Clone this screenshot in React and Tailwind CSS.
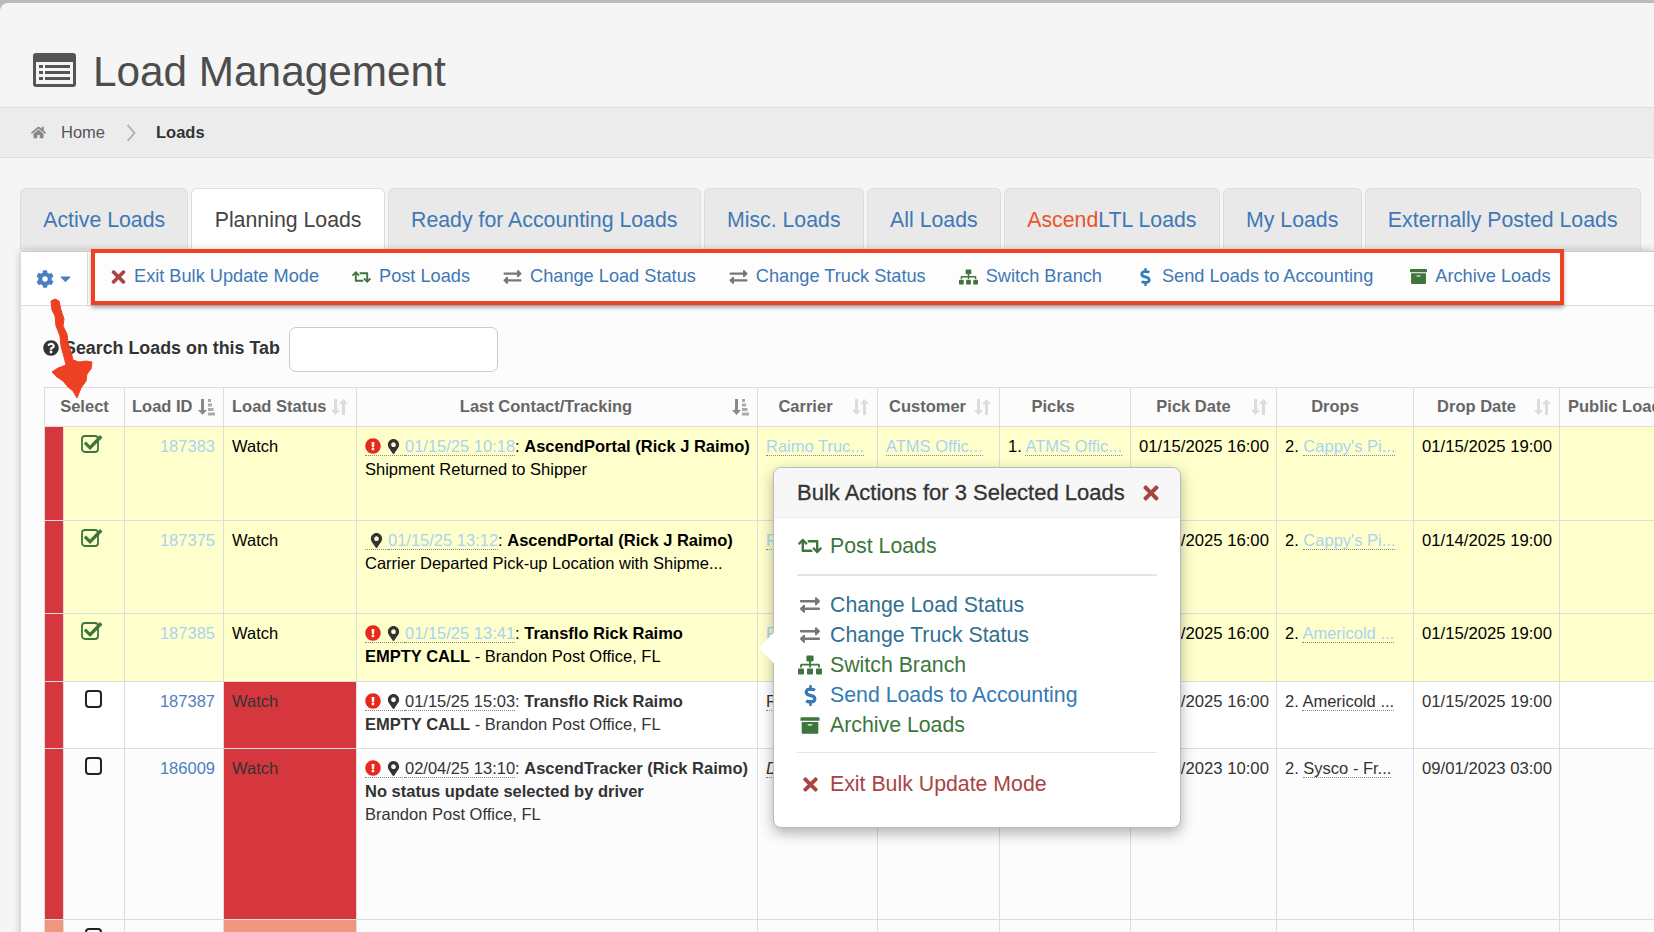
import React from "react";
import {
  FaCog,
  FaCaretDown,
  FaTimes,
  FaRetweet,
  FaExchangeAlt,
  FaSitemap,
  FaDollarSign,
  FaArchive,
  FaHome,
  FaMapMarkerAlt,
  FaExclamationCircle,
  FaQuestionCircle,
} from "react-icons/fa";

const tabs = [
  { label: "Active Loads" },
  { label: "Planning Loads", active: true },
  { label: "Ready for Accounting Loads" },
  { label: "Misc. Loads" },
  { label: "All Loads" },
  { label: "LTL Loads", prefix: "Ascend" },
  { label: "My Loads" },
  { label: "Externally Posted Loads" },
];

const TitleIcon = () => (
  <svg width="43" height="34" viewBox="0 0 43 34">
    <rect x="0" y="0" width="43" height="34" rx="3" fill="#555" />
    <rect x="3" y="9" width="37" height="22" fill="#f5f5f5" />
    <rect x="6" y="12" width="4" height="3" fill="#555" />
    <rect x="6" y="18" width="4" height="3" fill="#555" />
    <rect x="6" y="24" width="4" height="3" fill="#555" />
    <rect x="12" y="12" width="25" height="3" fill="#555" />
    <rect x="12" y="18" width="25" height="3" fill="#555" />
    <rect x="12" y="24" width="25" height="3" fill="#555" />
  </svg>
);

const SortActive = () => (
  <svg width="17" height="18" viewBox="0 0 17 18" className="absolute right-[8px] top-[10px]">
    <path d="M3 1h3v11h3l-4.500 5L0 12h3z" fill="#8a8a8a" />
    <rect x="10" y="1" width="3" height="3" fill="#aaa" />
    <rect x="10" y="5.500" width="4" height="3" fill="#aaa" />
    <rect x="10" y="10" width="5.500" height="3" fill="#aaa" />
    <rect x="10" y="14.500" width="7" height="3" fill="#aaa" />
  </svg>
);

const SortIdle = () => (
  <svg width="17" height="18" viewBox="0 0 17 18" className="absolute right-[8px] top-[10px]">
    <path d="M3 1h3v11h3l-4.500 5L0 12h3z" fill="#dcdcdc" />
    <path d="M11 17h3V6h3l-4.500-5L8 6h3z" fill="#dcdcdc" />
  </svg>
);

const Checked = () => (
  <svg width="22" height="20" viewBox="0 0 22 20" className="ml-[17px]">
    <rect x="1" y="3" width="16" height="16" rx="3" fill="none" stroke="#3c763d" strokeWidth="1.800" />
    <path d="M5 8.500l4 4L19 2l2.500 2.500L9 17 2.800 10.800z" fill="#3c763d" />
  </svg>
);

const Unchecked = () => (
  <div className="ml-[21px] h-[18px] w-[17px] rounded-[4px] border-2 border-[#222]" />
);

const Dotted = ({ className, children }) => (
  <span className={`border-b border-dotted border-[#888] ${className || ""}`}>{children}</span>
);

const Flags = ({ alert }) => (
  <span className="border-b border-dotted border-[#888]">
    {alert ? (
      <FaExclamationCircle className="mr-[6px] inline h-[16px] w-[16px] align-[-2px] text-[#e8281f]" />
    ) : (
      <span className="inline-block w-[5px]" />
    )}
    <FaMapMarkerAlt className="mr-[5px] inline h-[15px] w-[13px] align-[-2px] text-[#333]" />
  </span>
);

const rows = [
  {
    id: "187383",
    checked: true,
    dim: true,
    h: "h-[94px]",
    bg: "bg-[#ffffcc]",
    alert: true,
    date: "01/15/25 10:18",
    who: "AscendPortal (Rick J Raimo)",
    body: <div>Shipment Returned to Shipper</div>,
    carrier: "Raimo Truc...",
    customer: "ATMS Offic...",
    pick: "ATMS Offic...",
    pickDate: "01/15/2025 16:00",
    drop: "Cappy's Pi...",
    dropDate: "01/15/2025 19:00",
  },
  {
    id: "187375",
    checked: true,
    dim: true,
    h: "h-[93px]",
    bg: "bg-[#ffffcc]",
    date: "01/15/25 13:12",
    who: "AscendPortal (Rick J Raimo)",
    body: <div>Carrier Departed Pick-up Location with Shipme...</div>,
    carrier: "Raimo Truc...",
    customer: "ATMS Offic...",
    pick: "ATMS Offic...",
    pickDate: "01/15/2025 16:00",
    drop: "Cappy's Pi...",
    dropDate: "01/14/2025 19:00",
  },
  {
    id: "187385",
    checked: true,
    dim: true,
    h: "h-[68px]",
    bg: "bg-[#ffffcc]",
    alert: true,
    date: "01/15/25 13:41",
    who: "Transflo Rick Raimo",
    body: (
      <div>
        <b>EMPTY CALL</b> - Brandon Post Office, FL
      </div>
    ),
    carrier: "Raimo Truc...",
    customer: "ATMS Offic...",
    pick: "ATMS Offic...",
    pickDate: "01/15/2025 16:00",
    drop: "Americold ...",
    dropDate: "01/15/2025 19:00",
  },
  {
    id: "187387",
    status: "bg-[#d6363e]",
    h: "h-[67px]",
    bg: "bg-white",
    alert: true,
    date: "01/15/25 15:03",
    who: "Transflo Rick Raimo",
    body: (
      <div>
        <b>EMPTY CALL</b> - Brandon Post Office, FL
      </div>
    ),
    carrier: "Raimo Truc...",
    customer: "ATMS Offic...",
    pick: "ATMS Offic...",
    pickDate: "01/15/2025 16:00",
    drop: "Americold ...",
    dropDate: "01/15/2025 19:00",
  },
  {
    id: "186009",
    status: "bg-[#d6363e]",
    h: "h-[171px]",
    bg: "bg-[#fcfcfc]",
    alert: true,
    date: "02/04/25 13:10",
    who: "AscendTracker (Rick Raimo)",
    italic: true,
    body: (
      <div>
        <div className="font-bold">No status update selected by driver</div>
        <div>Brandon Post Office, FL</div>
      </div>
    ),
    carrier: "Dispatch...",
    customer: "",
    pick: "",
    pickDate: "09/01/2023 10:00",
    drop: "Sysco - Fr...",
    dropDate: "09/01/2023 03:00",
  },
];

const toolbar = [
  { label: "Exit Bulk Update Mode", icon: <FaTimes className="h-[20px] w-[15px] text-[#a94442]" /> },
  { label: "Post Loads", icon: <FaRetweet className="h-[18px] w-[19px] text-[#3c763d]" /> },
  { label: "Change Load Status", icon: <FaExchangeAlt className="h-[18px] w-[19px] text-[#777]" /> },
  { label: "Change Truck Status", icon: <FaExchangeAlt className="h-[18px] w-[19px] text-[#777]" /> },
  { label: "Switch Branch", icon: <FaSitemap className="h-[18px] w-[19px] text-[#3c763d]" /> },
  { label: "Send Loads to Accounting", icon: <FaDollarSign className="ml-[5px] mr-[3px] h-[18px] w-[11px] text-[#337ab7]" /> },
  { label: "Archive Loads", icon: <FaArchive className="ml-[4px] h-[17px] w-[17px] text-[#3c763d]" /> },
];

const App = () => {
  return (
    <div className="relative h-[932px] w-[1654px] overflow-hidden bg-[#bbb] pt-[3px] font-['Liberation_Sans',Arial,sans-serif] text-[16.500px] text-[#333]">
      <div className="h-full rounded-tl-[8px] bg-[#f5f5f5]">
        {/* Page title */}
        <div className="flex h-[105px] items-end gap-[17px] border-b border-[#ddd] pb-[9px] pl-[33px]">
          <div className="mb-[11px]">
            <TitleIcon />
          </div>
          <h1 className="text-[42.300px] leading-[52px] text-[#4d4d4d]">Load Management</h1>
        </div>

        {/* Breadcrumb */}
        <div className="flex h-[50px] items-center border-b border-[#ddd] bg-[#ececec] pl-[31px]">
          <FaHome className="h-[15px] w-[15px] text-[#888]" />
          <span className="ml-[15px] text-[#555]">Home</span>
          <svg width="10" height="18" viewBox="0 0 10 18" className="ml-[21px]">
            <path d="M1.500 1l7 8-7 8" fill="none" stroke="#aaa" strokeWidth="1.600" />
          </svg>
          <span className="ml-[20px] font-bold text-[#333]">Loads</span>
        </div>

        {/* Tabs */}
        <div className="flex gap-[3px] pl-[20px] pt-[30px]">
          {tabs.map((t) => (
            <div
              key={t.label}
              className={
                t.active
                  ? "flex h-[62px] items-center rounded-t-[6px] border border-b-0 border-[#ddd] bg-white px-[22.250px] pt-[3px] text-[21.300px] text-[#444]"
                  : "flex h-[62px] items-center rounded-t-[6px] border border-b-0 border-[#ddd] bg-[#e9e9e9] px-[22.250px] pt-[3px] text-[21.300px] text-[#3f78b5]"
              }
            >
              {t.prefix && <span className="text-[#e8562a]">{t.prefix}</span>}
              {t.label}
            </div>
          ))}
        </div>

        {/* Panel */}
        <div className="relative z-10 ml-[21px] mt-[1px] h-[700px] border-t border-[#ccc] bg-[#fcfcfc] shadow-[0_0_8px_rgba(0,0,0,0.25)]">
          <div className="flex h-[54px] border-b border-[#ddd] bg-white">
            <div className="flex w-[67px] items-center justify-center gap-[4px] border-r border-[#ddd] text-[#4a80bd]">
              <FaCog className="h-[18px] w-[18px]" />
              <FaCaretDown className="h-[17px] w-[15px]" />
            </div>
            <div className="z-10 ml-[3px] -mt-[3px] flex h-[56px] w-[1473px] items-center gap-[33px] border-4 border-[#ee4023] bg-[#fdfdfd] pl-[16px] shadow-[0_3px_4px_rgba(0,0,0,0.3)]">
              {toolbar.map((item) => (
                <div key={item.label} className="flex items-center gap-[8px] text-[18.200px] text-[#3f78b5]">
                  {item.icon}
                  <span>{item.label}</span>
                </div>
              ))}
            </div>
          </div>

          {/* Search */}
          <div className="flex h-[81px] items-start pl-[22px] pt-[21px]">
            <div className="mt-[8px] flex items-center gap-[5px] text-[17.850px] font-bold text-[#333]">
              <FaQuestionCircle className="h-[16px] w-[16px]" />
              <span>Search Loads on this Tab</span>
            </div>
            <div className="ml-[9px] h-[45px] w-[209px] rounded-[7px] border border-[#ccc] bg-white" />
          </div>

          {/* Table */}
          <table className="ml-[23px] w-[1705px] table-fixed border-collapse text-[16.500px]">
            <colgroup>
              <col className="w-[19px]" />
              <col className="w-[61px]" />
              <col className="w-[99px]" />
              <col className="w-[133px]" />
              <col className="w-[401px]" />
              <col className="w-[120px]" />
              <col className="w-[122px]" />
              <col className="w-[131px]" />
              <col className="w-[146px]" />
              <col className="w-[137px]" />
              <col className="w-[146px]" />
              <col className="w-[190px]" />
            </colgroup>
            <thead>
              <tr className="h-[39px] font-bold text-[#666]">
                <th colSpan={2} className="border border-[#ddd] px-1 pb-[2px] text-center">Select</th>
                <th className="relative border border-[#ddd] pb-[2px] pl-[7px] text-left">Load ID<SortActive /></th>
                <th className="relative border border-[#ddd] pb-[2px] pl-[8px] text-left">Load Status<SortIdle /></th>
                <th className="relative border border-[#ddd] pb-[2px] pr-[22px] text-center">Last Contact/Tracking<SortActive /></th>
                <th className="relative border border-[#ddd] pb-[2px] pr-[24px] text-center">Carrier<SortIdle /></th>
                <th className="relative border border-[#ddd] pb-[2px] pr-[22px] text-center">Customer<SortIdle /></th>
                <th className="border border-[#ddd] pb-[2px] pr-[24px] text-center">Picks</th>
                <th className="relative border border-[#ddd] pb-[2px] pr-[20px] text-center">Pick Date<SortIdle /></th>
                <th className="border border-[#ddd] pb-[2px] pr-[20px] text-center">Drops</th>
                <th className="relative border border-[#ddd] pb-[2px] pr-[20px] text-center">Drop Date<SortIdle /></th>
                <th className="whitespace-nowrap border border-[#ddd] pb-[2px] pl-[8px] text-left">Public Load</th>
              </tr>
            </thead>
            <tbody>
              {rows.map((r) => {
                const linkColor = r.dim ? "text-[#a9d3f2]" : "text-[#4a80bd]";
                const textColor = r.dim ? "text-black" : "text-[#333]";
                return (
                  <tr key={r.id} className={`${r.h} ${r.bg} ${textColor} leading-[23px]`}>
                    <td className="border border-[#ddd] bg-[#d6363e]" />
                    <td className={`border border-[#ddd] align-top ${r.checked ? "pt-[6px]" : "pt-[8px]"}`}>
                      {r.checked ? <Checked /> : <Unchecked />}
                    </td>
                    <td className={`border border-[#ddd] px-[8px] pt-[8px] text-right align-top ${linkColor}`}>{r.id}</td>
                    <td className={`border border-[#ddd] px-[8px] pt-[8px] align-top ${r.status || ""}`}>Watch</td>
                    <td className="whitespace-nowrap border border-[#ddd] px-[8px] pt-[8px] align-top">
                      <div>
                        <Flags alert={r.alert} />
                        <Dotted className={r.dim ? "text-[#a9d3f2]" : ""}>{r.date}</Dotted>: <b>{r.who}</b>
                      </div>
                      {r.body}
                    </td>
                    <td className="overflow-hidden whitespace-nowrap border border-[#ddd] px-[8px] pt-[8px] align-top">
                      <Dotted className={r.dim ? "text-[#a9d3f2]" : r.italic ? "italic" : ""}>{r.carrier}</Dotted>
                    </td>
                    <td className="overflow-hidden whitespace-nowrap border border-[#ddd] px-[8px] pt-[8px] align-top">
                      {r.customer && <Dotted className={r.dim ? "text-[#a9d3f2]" : ""}>{r.customer}</Dotted>}
                    </td>
                    <td className="overflow-hidden whitespace-nowrap border border-[#ddd] px-[8px] pt-[8px] align-top">
                      {r.pick && (
                        <>
                          1. <Dotted className={r.dim ? "text-[#a9d3f2]" : ""}>{r.pick}</Dotted>
                        </>
                      )}
                    </td>
                    <td className="whitespace-nowrap border border-[#ddd] px-[8px] pt-[8px] align-top text-[16.700px]">{r.pickDate}</td>
                    <td className="overflow-hidden whitespace-nowrap border border-[#ddd] px-[8px] pt-[8px] align-top">
                      2. <Dotted className={r.dim ? "text-[#a9d3f2]" : ""}>{r.drop}</Dotted>
                    </td>
                    <td className="whitespace-nowrap border border-[#ddd] px-[8px] pt-[8px] align-top text-[16.700px]">{r.dropDate}</td>
                    <td className="border border-[#ddd]" />
                  </tr>
                );
              })}
              <tr className="h-[40px] bg-[#fcfcfc]">
                <td className="border border-[#ddd] bg-[#f0967c]" />
                <td className="border border-[#ddd] pt-[8px] align-top"><Unchecked /></td>
                <td className="border border-[#ddd]" />
                <td className="border border-[#ddd] bg-[#f0967c]" />
                <td className="border border-[#ddd] px-[8px] pt-[8px] align-top">
                  <Flags />
                </td>
                <td className="border border-[#ddd]" />
                <td className="border border-[#ddd]" />
                <td className="border border-[#ddd]" />
                <td className="border border-[#ddd]" />
                <td className="border border-[#ddd]" />
                <td className="border border-[#ddd]" />
                <td className="border border-[#ddd]" />
              </tr>
            </tbody>
          </table>
        </div>
      </div>

      {/* Hand-drawn arrow over the table */}
      <svg width="60" height="110" viewBox="0 0 60 110" className="absolute left-[46px] top-[296px] z-20">
        <path
          d="M5 5L9 3L13 5L15 14L18 23L17 30L21 38L22 47L25 56L27 64L33 66L40 65L46 66L45 73L41 78L40 85L35 92L31 102L27 95L22 91L17 85L11 81L6 76L12 72L20 69L18 61L15 50L14 40L10 30L9 20L6 14z"
          fill="#ee4023"
          stroke="#ee4023"
          strokeWidth="1"
        />
      </svg>

      {/* Bulk actions popover */}
      <div className="absolute left-[773px] top-[467px] z-30 h-[361px] w-[408px] rounded-[8px] border border-[#bbb] bg-white shadow-[0_5px_14px_rgba(0,0,0,0.3)]">
        <div className="absolute -left-[11px] top-[169px] h-[22px] w-[22px] rotate-45 bg-white" />
        <div className="relative flex h-[50px] items-center justify-between rounded-t-[8px] border-b border-[#eee] bg-[#f7f7f7] pl-[23px] pr-[21px]">
          <span className="text-[22px] text-[#333] [-webkit-text-stroke:0.3px_#333]">Bulk Actions for 3 Selected Loads</span>
          <FaTimes className="h-[22px] w-[16px] text-[#a94442]" />
        </div>
        <div className="relative pl-[24px] pr-[23px] text-[21.300px] leading-[30px]">
          <div className="mt-[13px] flex items-center gap-[8px] text-[#3c763d]">
            <FaRetweet className="h-[22px] w-[24px]" />
            <span>Post Loads</span>
          </div>
          <div className="-ml-[1px] mb-[14px] mt-[13px] h-[2px] bg-[#e5e5e5]" />
          <div className="flex items-center gap-[8px] text-[#31708f]">
            <FaExchangeAlt className="h-[20px] w-[24px] text-[#777]" />
            <span>Change Load Status</span>
          </div>
          <div className="flex items-center gap-[8px] text-[#31708f]">
            <FaExchangeAlt className="h-[20px] w-[24px] text-[#777]" />
            <span>Change Truck Status</span>
          </div>
          <div className="flex items-center gap-[8px] text-[#3c763d]">
            <FaSitemap className="h-[20px] w-[24px]" />
            <span>Switch Branch</span>
          </div>
          <div className="flex items-center gap-[8px] text-[#337ab7]">
            <span className="flex w-[24px] justify-center"><FaDollarSign className="h-[21px] w-[13px]" /></span>
            <span>Send Loads to Accounting</span>
          </div>
          <div className="flex items-center gap-[8px] text-[#3c763d]">
            <FaArchive className="h-[19px] w-[24px]" />
            <span>Archive Loads</span>
          </div>
          <div className="-ml-[1px] mb-[16px] mt-[12px] h-px bg-[#e5e5e5]" />
          <div className="flex items-center gap-[8px] text-[#a94442]">
            <span className="flex w-[24px] justify-center"><FaTimes className="h-[21px] w-[15px]" /></span>
            <span>Exit Bulk Update Mode</span>
          </div>
        </div>
      </div>
    </div>
  );
};

export default App;
